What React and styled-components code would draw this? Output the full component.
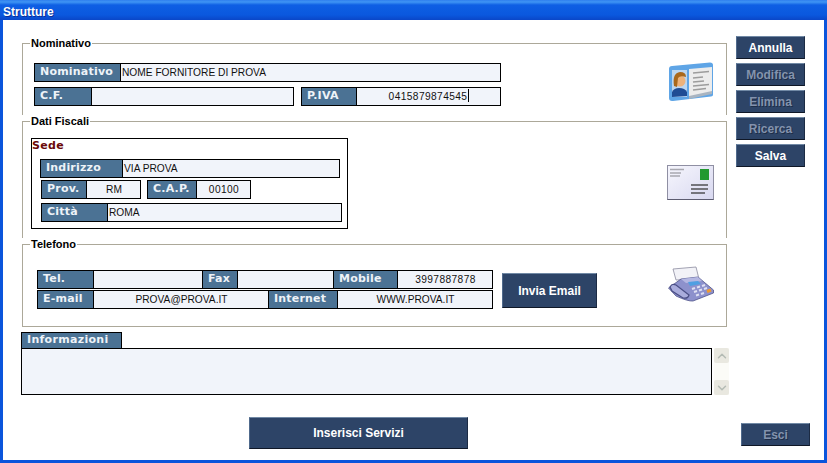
import styled, { createGlobalStyle } from 'styled-components'
import { ChevronUp, ChevronDown } from 'lucide-react'

const GlobalStyle = createGlobalStyle`
  html, body {
    margin: 0;
    padding: 0;
    background: #fff;
  }
`

const CardIcon = () => (
  <svg width='46' height='40' viewBox='0 0 46 40'>
    <path d='M1 7 Q1 4 4 4 L42 0.500 Q45 0.500 45 3 L45 33 Q45 34 43 34.500 L5 39 Q1 39.500 1 36 Z' fill='#5fa5e6' />
    <path d='M21 7 L44 5 L44 30 L21 35 Z' fill='#ececec' />
    <path d='M21 34 L44 29 L44 32 L21 37 Z' fill='#a9b4c0' />
    <path d='M25 11 L41 9.500 M25 16 L35 15 M25 20 L36 19 M25 24 L41 22.500 M25 28 L38 26.500' stroke='#9c9c9c' strokeWidth='1.500' />
    <rect x='4' y='8' width='15' height='27' fill='#bcd6f0' />
    <path d='M4 35 L4 30 Q6 26 11 26 Q17 26 19 30 L19 34 Z' fill='#1f4c94' />
    <circle cx='12' cy='19' r='5.500' fill='#eeb27a' />
    <path d='M6 24 Q4 11 12 10 Q18 10 18 15 Q12 13 10 16 L9 25 Z' fill='#a9681c' />
  </svg>
)

const EnvelopeIcon = () => (
  <svg width='47' height='35' viewBox='0 0 47 35'>
    <defs>
      <linearGradient id='envelope-paper' x1='0' y1='0' x2='1' y2='1'>
        <stop offset='0' stopColor='#f6f6fd' />
        <stop offset='1' stopColor='#d8d8f0' />
      </linearGradient>
    </defs>
    <rect x='0.500' y='0.500' width='46' height='34' fill='url(#envelope-paper)' stroke='#8f8fa3' />
    <path d='M0.500 34.500 H46.500' stroke='#5c5c70' />
    <rect x='33' y='4' width='9' height='11' fill='#22992f' />
    <path d='M3 4.500 H17 M3 8 H14 M3 11 H13' stroke='#a8a8b0' strokeWidth='1.300' />
    <path d='M24 20 H41 M24 24 H41 M24 28 H38' stroke='#74747c' strokeWidth='1.800' />
  </svg>
)

const FaxIcon = () => (
  <svg width='46' height='36' viewBox='0 0 46 36'>
    <path d='M5 3 L28 1 L31 13 L8 14 Z' fill='#f2f2f7' stroke='#8c8ca0' strokeWidth='0.800' />
    <path d='M0.500 22 L13 13 L30 11 L45.500 24 L45.500 27 L25 35 Q20 35.500 8 30 Z' fill='#8d91cc' stroke='#50548a' strokeWidth='0.800' />
    <path d='M13 13 L30 11 L34 15 L18 17 Z' fill='#b4b7e2' />
    <path d='M2 21 Q4 17 8 19 L21 29 Q20 33 15 32 L4 25 Z' fill='#a9acdc' stroke='#4a4e85' strokeWidth='1.200' />
    <path d='M20 16 L30 15 L33 18 L22 20 Z' fill='#4f9fe2' />
    <path d='M24 23 L27 22 M29 21.500 L32 20.500 M34 20 L37 19 M26 26 L29 25 M31 24.500 L34 23.500 M36 23 L39 22 M28 29.500 L31 28.500 M33 28 L36 27' stroke='#dfe0f2' strokeWidth='2' />
    <path d='M39 25.500 L43 24' stroke='#f09a30' strokeWidth='3' />
  </svg>
)

const App = () => {
  return (
    <Window>
      <GlobalStyle />
      <TitleBar>Strutture</TitleBar>
      <Body>
        <Top>
          <Sections>
            <Group $height={78} $open>
              <legend>Nominativo</legend>
              <GroupRow $pad={12}>
                <Fields $top={1}>
                  <Field $w={467}>
                    <Label $w={86}>Nominativo</Label>
                    <Value>NOME FORNITORE DI PROVA</Value>
                  </Field>
                  <Row $gap={7}>
                    <Field $w={260}>
                      <Label $w={57}>C.F.</Label>
                      <Value />
                    </Field>
                    <Field $w={200}>
                      <Label $w={55}>P.IVA</Label>
                      <Value $center $number>0415879874545<Caret /></Value>
                    </Field>
                  </Row>
                </Fields>
                <IconSlot $top={0}><CardIcon /></IconSlot>
              </GroupRow>
            </Group>

            <Group $height={123} $open>
              <legend>Dati Fiscali</legend>
              <GroupRow $pad={10} $left={8}>
                <SedeBox>
                  <SedeTitle>Sede</SedeTitle>
                  <Field $w={300}>
                    <Label $w={82}>Indirizzo</Label>
                    <Value>VIA PROVA</Value>
                  </Field>
                  <Row $gap={6} $top={2} $shift={1}>
                    <Field $w={100}>
                      <Label $w={45}>Prov.</Label>
                      <Value $center>RM</Value>
                    </Field>
                    <Field $w={104}>
                      <Label $w={49}>C.A.P.</Label>
                      <Value $center $number>00100</Value>
                    </Field>
                  </Row>
                  <Row $top={4} $shift={1}>
                    <Field $w={301}>
                      <Label $w={66}>Città</Label>
                      <Value>ROMA</Value>
                    </Field>
                  </Row>
                </SedeBox>
                <IconSlot $top={27}><EnvelopeIcon /></IconSlot>
              </GroupRow>
            </Group>

            <Group $height={89}>
              <legend>Telefono</legend>
              <GroupRow $pad={14} $left={14}>
                <Fields $top={5} $gap={1}>
                  <Field $w={456}>
                    <Label $w={56}>Tel.</Label>
                    <Value $w={109} />
                    <Label $w={35}>Fax</Label>
                    <Value $w={96} />
                    <Label $w={64}>Mobile</Label>
                    <Value $center $number>3997887878</Value>
                  </Field>
                  <Field $w={456}>
                    <Label $w={56}>E-mail</Label>
                    <Value $w={175} $center>PROVA@PROVA.IT</Value>
                    <Label $w={69}>Internet</Label>
                    <Value $center>WWW.PROVA.IT</Value>
                  </Field>
                </Fields>
                <MailButton>Invia Email</MailButton>
                <IconSlot $top={1}><FaxIcon /></IconSlot>
              </GroupRow>
            </Group>
          </Sections>

          <Actions>
            <ActionButton>Annulla</ActionButton>
            <ActionButton disabled>Modifica</ActionButton>
            <ActionButton disabled>Elimina</ActionButton>
            <ActionButton disabled>Ricerca</ActionButton>
            <ActionButton>Salva</ActionButton>
          </Actions>
        </Top>

        <InfoTab>Informazioni</InfoTab>
        <InfoRow>
          <InfoBox />
          <Scrollbar>
            <ScrollArrow><ChevronUp size={14} strokeWidth={2.500} /></ScrollArrow>
            <ScrollArrow><ChevronDown size={14} strokeWidth={2.500} /></ScrollArrow>
          </Scrollbar>
        </InfoRow>

        <Bottom>
          <ServicesButton>Inserisci Servizi</ServicesButton>
          <ExitButton disabled>Esci</ExitButton>
        </Bottom>
      </Body>
    </Window>
  )
}

const Window = styled.div`
  display: flex;
  flex-direction: column;
  width: 827px;
  height: 463px;
  overflow: hidden;
  background: #0a55dc;
`

const TitleBar = styled.div`
  height: 20px;
  padding-left: 3px;
  box-sizing: border-box;

  font-family: 'Liberation Sans', sans-serif;
  font-size: 12px;
  font-weight: bold;
  line-height: 24px;
  color: #fff;
  text-shadow: 1px 1px 0 #0a2f9a;

  background: linear-gradient(to bottom, #2f7fee 0, #3f95f4 2px, #0e5fe4 5px, #0a58de 15px, #0a46c8 20px);
`

const Body = styled.div`
  flex: 1;
  min-height: 0;
  margin: 0 3px 3px 3px;
  padding: 17px 14px 0 18px;

  background: #fff;
`

const Top = styled.div`
  display: flex;
  gap: 9px;
`

const Sections = styled.div`
  display: flex;
  flex-direction: column;
  width: 706px;
`

const Group = styled.fieldset`
  box-sizing: border-box;
  height: ${(p) => p.$height}px;
  margin: 0 0 0 1px;
  padding: 0;
  min-width: 0;

  border: 1px solid #aca899;
  border-bottom: ${(p) => (p.$open ? 'none' : '1px solid #aca899')};

  legend {
    margin-left: 7px;
    padding: 0 1px;

    font-family: 'Liberation Sans', sans-serif;
    font-size: 11px;
    font-weight: bold;
    line-height: 13px;
    color: #000;
  }
`

const GroupRow = styled.div`
  display: flex;
  align-items: flex-start;
  padding-top: ${(p) => p.$pad}px;
  padding-left: ${(p) => p.$left ?? 11}px;
`

const Fields = styled.div`
  display: flex;
  flex-direction: column;
  gap: ${(p) => p.$gap ?? 5}px;
  margin-top: ${(p) => p.$top ?? 0}px;
`

const Row = styled.div`
  display: flex;
  gap: ${(p) => p.$gap ?? 0}px;
  margin-top: ${(p) => p.$top ?? 0}px;
  margin-left: ${(p) => p.$shift ?? 0}px;
`

const Field = styled.div`
  display: flex;
  box-sizing: border-box;
  width: ${(p) => p.$w}px;
  height: 19px;

  border: 1px solid #000;
  background: #f1f4fa;
`

const Label = styled.div`
  flex: none;
  box-sizing: border-box;
  width: ${(p) => p.$w}px;
  padding-left: 5px;

  font-family: 'DejaVu Sans', sans-serif;
  font-size: 11px;
  font-weight: bold;
  letter-spacing: 0.200px;
  line-height: 15px;
  color: #eef3f8;
  white-space: nowrap;

  background: #4b7294;
  border-right: 1px solid #000;
`

const Value = styled.div`
  flex: ${(p) => (p.$w ? 'none' : '1')};
  box-sizing: border-box;
  width: ${(p) => (p.$w ? `${p.$w}px` : 'auto')};
  min-width: 0;
  padding-left: 1px;

  font-family: 'Liberation Sans', sans-serif;
  font-size: 10.2px;
  letter-spacing: ${(p) => (p.$number ? '0.4px' : '0')};
  line-height: 17px;
  text-align: ${(p) => (p.$center ? 'center' : 'left')};
  color: #111;
  white-space: nowrap;

  border-right: ${(p) => (p.$w ? '1px solid #000' : 'none')};
`

const Caret = styled.span`
  display: inline-block;
  width: 1px;
  height: 13px;
  margin-left: 1px;
  vertical-align: -2px;

  background: #000;
`

const IconSlot = styled.div`
  display: flex;
  margin-left: auto;
  margin-top: ${(p) => p.$top}px;
  margin-right: 12px;
`

const SedeBox = styled.div`
  box-sizing: border-box;
  width: 317px;
  height: 91px;
  padding: 0 0 0 8px;

  border: 1px solid #000;
`

const SedeTitle = styled.div`
  height: 20px;
  margin-left: -8px;

  font-family: 'DejaVu Sans', sans-serif;
  font-size: 11px;
  font-weight: bold;
  letter-spacing: 0.300px;
  line-height: 14px;
  color: #6b0a0a;
`

const Button = styled.button`
  display: block;
  box-sizing: border-box;
  margin: 0;
  padding: 0;

  font-family: 'Liberation Sans', sans-serif;
  font-size: 12px;
  font-weight: bold;
  color: #fff;
  text-align: center;

  background: #2d4467;
  border: 1px solid #2d4467;
  border-top-color: #7189a5;
  border-left-color: #506a8c;
  border-bottom-color: #0f1726;
  border-right-color: #1c2b44;

  &:disabled {
    color: #8493ad;
    text-shadow: 1px 1px 0 #1e2e48;
  }
`

const Actions = styled.div`
  display: flex;
  flex-direction: column;
  gap: 4px;
  width: 69px;
  margin-top: -1px;
`

const ActionButton = styled(Button)`
  width: 69px;
  height: 23px;
`

const MailButton = styled(Button)`
  flex: none;
  width: 95px;
  height: 35px;
  margin-top: 8px;
  margin-left: 9px;
`

const InfoTab = styled.div`
  box-sizing: border-box;
  width: 101px;
  height: 16px;
  margin-top: 5px;
  padding-left: 5px;

  font-family: 'DejaVu Sans', sans-serif;
  font-size: 11px;
  font-weight: bold;
  letter-spacing: 0.300px;
  line-height: 14px;
  color: #eef3f8;

  background: #4b7294;
  border: 1px solid #000;
  border-bottom: none;
`

const InfoRow = styled.div`
  display: flex;
  gap: 2px;
`

const InfoBox = styled.div`
  box-sizing: border-box;
  width: 691px;
  height: 47px;

  background: #f1f4fa;
  border: 1px solid #000;
`

const Scrollbar = styled.div`
  display: flex;
  flex-direction: column;
  justify-content: space-between;
  width: 15px;

  background: #fbfbf7;
`

const ScrollArrow = styled.div`
  display: flex;
  align-items: center;
  justify-content: center;
  height: 15px;

  color: #b4bbb4;
  background: #e9e8e0;
  border-radius: 2px;
`

const Bottom = styled.div`
  display: flex;
  align-items: flex-start;
  margin-top: 22px;
  padding-left: 228px;
`

const ServicesButton = styled(Button)`
  width: 219px;
  height: 32px;
`

const ExitButton = styled(Button)`
  width: 69px;
  height: 23px;
  margin-top: 6px;
  margin-left: auto;
`

export default App
